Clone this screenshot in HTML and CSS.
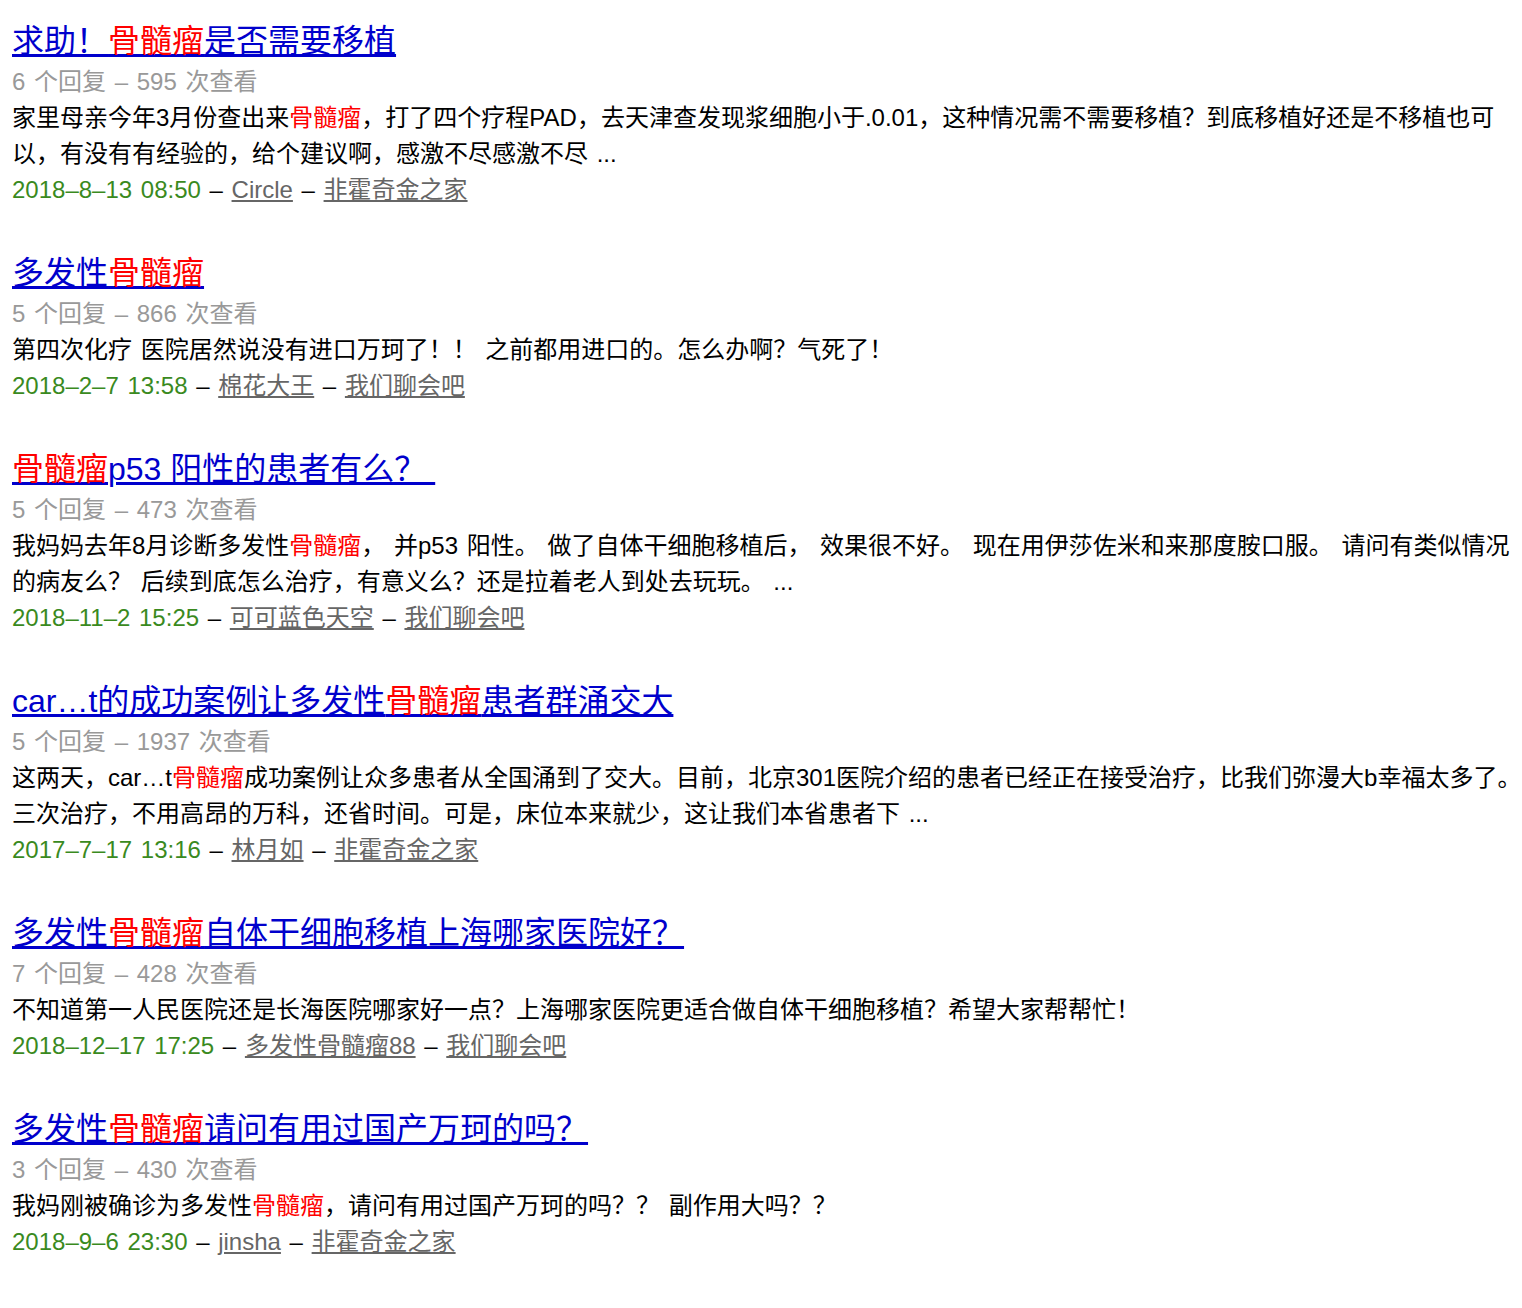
FILE: index.html
```html
<!DOCTYPE html>
<html lang="zh-CN">
<head>
<meta charset="utf-8">
<title>骨髓瘤 - 搜索结果</title>
<link rel="stylesheet" href="styles.css">
</head>
<body>
<div class="results">
  <div class="item">
    <a class="title" href="#">求助！<em>骨髓瘤</em>是否需要移植</a>
    <div class="meta">6 个回复 – 595 次查看</div>
    <p class="desc">家里母亲今年3月份查出来<em>骨髓瘤</em>，打了四个疗程PAD，去天津查发现浆细胞小于.0.01，这种情况需不需要移植？到底移植好还是不移植也可以，有没有有经验的，给个建议啊，感激不尽感激不尽 ...</p>
    <div class="foot"><span class="date">2018–8–13 08:50</span> – <a href="#">Circle</a> – <a href="#">非霍奇金之家</a></div>
  </div>
  <div class="item">
    <a class="title" href="#">多发性<em>骨髓瘤</em></a>
    <div class="meta">5 个回复 – 866 次查看</div>
    <p class="desc">第四次化疗 医院居然说没有进口万珂了！！ 之前都用进口的。怎么办啊？气死了！</p>
    <div class="foot"><span class="date">2018–2–7 13:58</span> – <a href="#">棉花大王</a> – <a href="#">我们聊会吧</a></div>
  </div>
  <div class="item">
    <a class="title" href="#"><em>骨髓瘤</em>p53 阳性的患者有么？&nbsp;</a>
    <div class="meta">5 个回复 – 473 次查看</div>
    <p class="desc">我妈妈去年8月诊断多发性<em>骨髓瘤</em>， 并p53 阳性。 做了自体干细胞移植后， 效果很不好。 现在用伊莎佐米和来那度胺口服。 请问有类似情况的病友么？ 后续到底怎么治疗，有意义么？还是拉着老人到处去玩玩。 ...</p>
    <div class="foot"><span class="date">2018–11–2 15:25</span> – <a href="#">可可蓝色天空</a> – <a href="#">我们聊会吧</a></div>
  </div>
  <div class="item">
    <a class="title" href="#">car…t的成功案例让多发性<em>骨髓瘤</em>患者群涌交大</a>
    <div class="meta">5 个回复 – 1937 次查看</div>
    <p class="desc">这两天，car…t<em>骨髓瘤</em>成功案例让众多患者从全国涌到了交大。目前，北京301医院介绍的患者已经正在接受治疗，比我们弥漫大b幸福太多了。三次治疗，不用高昂的万科，还省时间。可是，床位本来就少，这让我们本省患者下 ...</p>
    <div class="foot"><span class="date">2017–7–17 13:16</span> – <a href="#">林月如</a> – <a href="#">非霍奇金之家</a></div>
  </div>
  <div class="item">
    <a class="title" href="#">多发性<em>骨髓瘤</em>自体干细胞移植上海哪家医院好？</a>
    <div class="meta">7 个回复 – 428 次查看</div>
    <p class="desc">不知道第一人民医院还是长海医院哪家好一点？上海哪家医院更适合做自体干细胞移植？希望大家帮帮忙！</p>
    <div class="foot"><span class="date">2018–12–17 17:25</span> – <a href="#">多发性骨髓瘤88</a> – <a href="#">我们聊会吧</a></div>
  </div>
  <div class="item">
    <a class="title" href="#">多发性<em>骨髓瘤</em>请问有用过国产万珂的吗？</a>
    <div class="meta">3 个回复 – 430 次查看</div>
    <p class="desc">我妈刚被确诊为多发性<em>骨髓瘤</em>，请问有用过国产万珂的吗？？ 副作用大吗？？</p>
    <div class="foot"><span class="date">2018–9–6 23:30</span> – <a href="#">jinsha</a> – <a href="#">非霍奇金之家</a></div>
  </div>
</div>
</body>
</html>
```

FILE: styles.css
```css
html, body {
  margin: 0;
  padding: 0;
  background: #ffffff;
}

body {
  font-family: "Liberation Sans", "Noto Sans CJK SC", sans-serif;
  color: #000000;
  text-spacing-trim: space-all;
}

.results {
  padding: 18px 0 0 12px;
  width: 1510px;
}

.item {
  margin: 0 0 42px 0;
}

.title {
  display: inline;
  font-size: 32px;
  line-height: 46px;
  color: #0000cc;
  text-decoration: underline;
}

.title em {
  font-style: normal;
  color: #ff0000;
}

.title::after {
  content: "";
  display: block;
}

.meta,
.desc,
.foot {
  font-size: 24px;
  line-height: 36px;
  margin: 0;
  word-spacing: 2px;
}

.meta {
  color: #999999;
}

.desc {
  color: #000000;
}

.desc em {
  font-style: normal;
  color: #ff0000;
}

.foot {
  color: #000000;
}

.foot .date {
  color: #3a8a1e;
}

.foot a {
  color: #666666;
  text-decoration: underline;
}
```
